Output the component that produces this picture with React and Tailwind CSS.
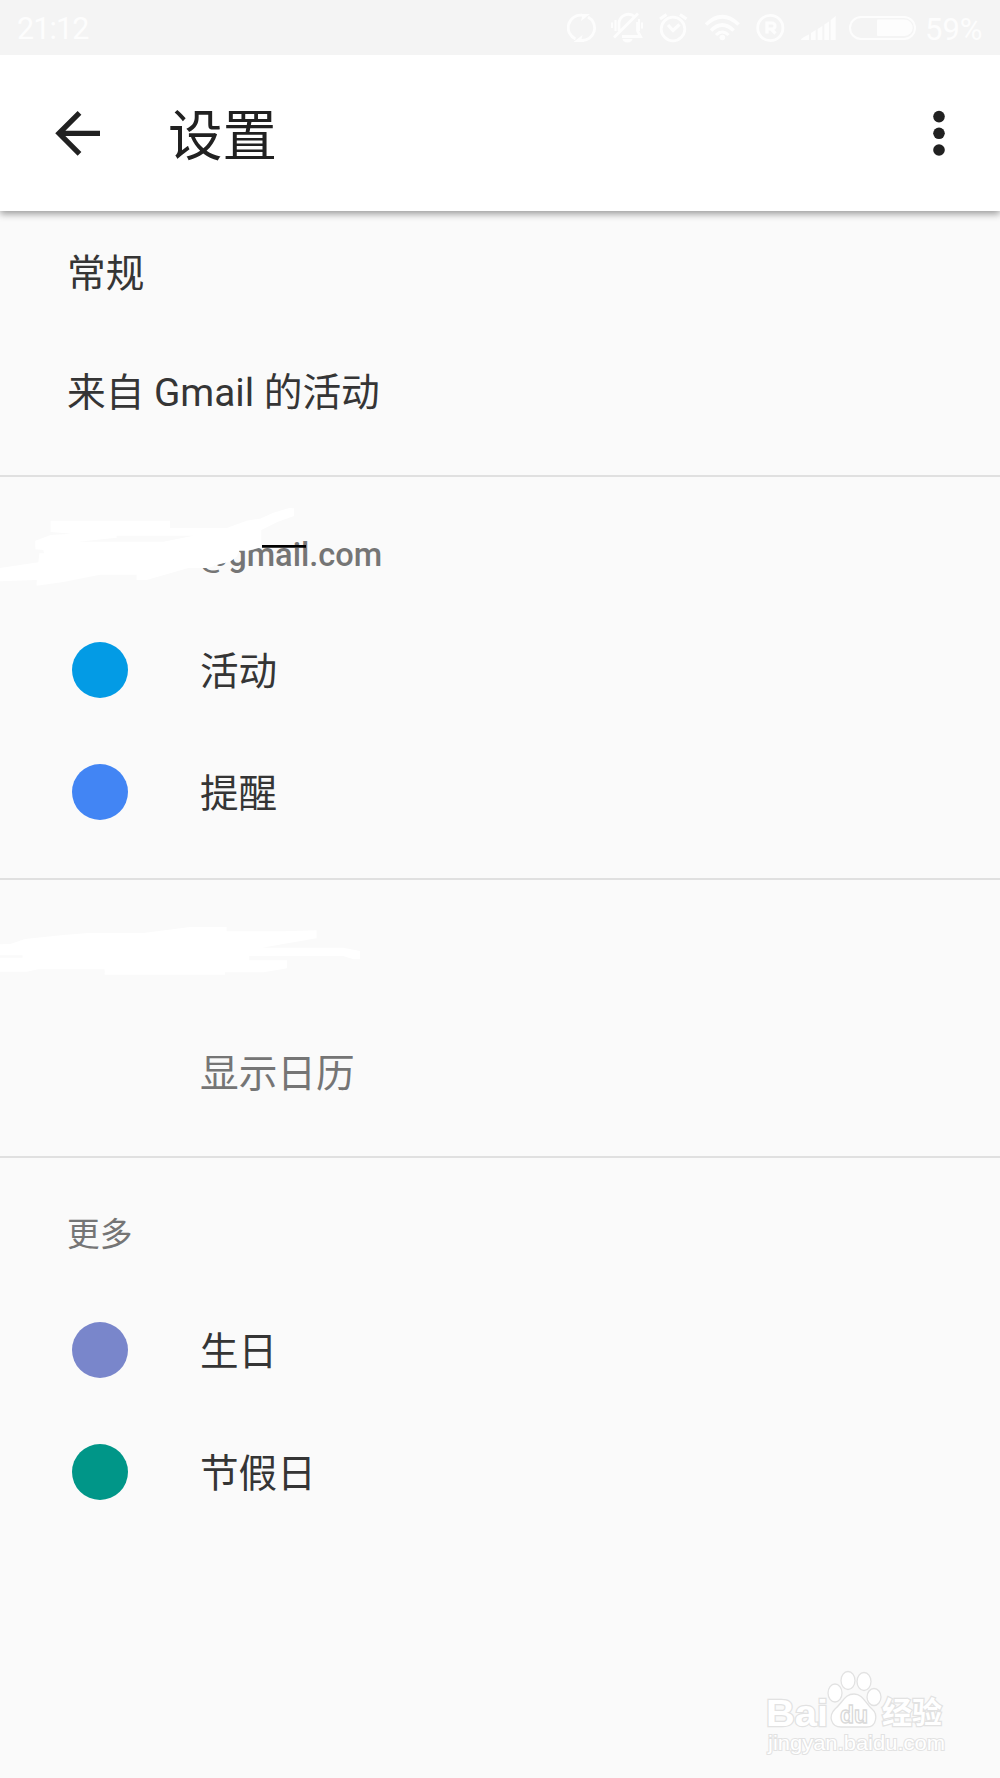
function StatusIcons() {
  return (
    <svg width="358" height="55" viewBox="0 0 358 55" fill="none" stroke="#fdfdfd" strokeWidth="2.8" className="shrink-0">
      <path d="M8.500 39A12.500 12.500 0 0 1 15 15.200M21 17A12.500 12.500 0 0 1 14.500 40.500" />
      <path d="M13 14h10l-9 7 1-4zM17.500 42h-11l9-7-1 4z" fill="#fdfdfd" stroke="none" />
      <path d="M52 31V24a9.500 9.500 0 0 1 15.500-7.500M70.500 22v9l3 5.500H55M47 37.500L71 13.500" />
      <path d="M55.500 39h10a5 3.500 0 0 1-10 0z" fill="#fdfdfd" stroke="none" />
      <path d="M48.500 20v11M45 22.500v5.500M72 19v12M75 22.500v6" strokeWidth="2" />
      <circle cx="106" cy="29" r="11.800" />
      <path d="M101 25l5 5.500 6.500-6M93 19l6.500-4.500M119.500 19l-6.500-4.500" strokeWidth="3.200" />
      <g strokeWidth="3.600">
        <path d="M139 24.500q16.300-15.500 32.600 0" />
        <path d="M144 30.500q11.300-11 22.600 0" />
        <path d="M149 35q6.300-6 12.600 0" strokeWidth="3" />
      </g>
      <circle cx="155.300" cy="37.500" r="2.800" fill="#fdfdfd" stroke="none" />
      <circle cx="203.300" cy="28" r="12.600" />
      <path d="M200 33.500V23h5a3 3 0 0 1 0 6h-5M204 29l4.500 4.500" strokeWidth="3.200" />
      <path d="M233.700 40q1-2.500 8.300-5.500V40zM244 33l4.700-3V40H244zM250.700 29l4.600-3v14h-4.600zM257.300 24.500l4.700-3V40h-4.700zM263.700 20l5-4V40h-5z" fill="#fdfdfd" stroke="none" />
      <rect x="283" y="17" width="65" height="22" rx="11" strokeWidth="2" />
      <path d="M311 19.500h26.500a8.200 8.200 0 0 1 0 16.500H311q-1 0-1-1V20.500q0-1 1-1z" fill="#fdfdfd" stroke="none" />
    </svg>
  );
}

function CalendarRow({ color, label }) {
  return (
    <div className="flex h-[122px] items-center pl-[72px]">
      <span className={`size-14 rounded-full ${color}`} />
      <span className="ml-[72px] pt-[5px] text-[38.600px] leading-none text-[#353535]">{label}</span>
    </div>
  );
}

function Watermark() {
  return (
    <svg width="190" height="100" viewBox="0 0 190 100" className="absolute left-[763px] top-[1663px]" fill="#fff" stroke="#e2e2e2" strokeWidth="1.300">
      <g paintOrder="stroke" strokeWidth="2.400">
        <text x="3" y="62.500" fontSize="37" fontWeight="700" textLength="62" lengthAdjust="spacingAndGlyphs" className="font-['Liberation_Sans',sans-serif]">Bai</text>
        <text x="119" y="60" fontSize="29.500" fontWeight="700" textLength="60" lengthAdjust="spacingAndGlyphs" className="font-['Noto_Sans_CJK_SC',sans-serif]">经验</text>
        <text x="5" y="87" fontSize="21" textLength="177" lengthAdjust="spacingAndGlyphs" strokeWidth="2" className="font-['Liberation_Sans',sans-serif]">jingyan.baidu.com</text>
      </g>
      <ellipse cx="72" cy="30" rx="7" ry="9" />
      <ellipse cx="85" cy="17.500" rx="7" ry="9" />
      <ellipse cx="101" cy="18.500" rx="7" ry="9" />
      <ellipse cx="111" cy="34" rx="7" ry="8.500" />
      <path d="M91 31c9 0 11 9 18 15 6 5 5 18-5 18H78c-10 0-13-11-6-18 8-7 10-15 19-15z" />
      <text x="77" y="59.500" fontSize="23" fontWeight="700" stroke="#d9d9d9" textLength="28" lengthAdjust="spacingAndGlyphs" className="font-['Liberation_Sans',sans-serif]">du</text>
    </svg>
  );
}

export default function App() {
  return (
    <div className="relative h-[1778px] w-[1000px] overflow-hidden bg-[#fafafa] font-[Roboto,'Noto_Sans_CJK_SC',sans-serif]">
      <div className="relative z-10 flex h-[55px] items-center bg-[#f4f4f4] text-[#fdfdfd]">
        <span className="w-[567px] pl-[17px] pt-[4px] text-[30.500px] leading-none tracking-[-0.900px]">21:12</span>
        <StatusIcons />
        <span className="pt-[4px] text-[31px] leading-none">59%</span>
      </div>
      <header className="relative flex h-[156px] items-center bg-white shadow-[0_3px_7px_rgba(0,0,0,0.38)]">
        <svg width="46" height="46" viewBox="0 0 46 46" className="ml-[55px] shrink-0" fill="none" stroke="#212121" strokeWidth="5.300">
          <path d="M45 23.300H5M24.500 2.800L4 23.300l20.500 20.500" />
        </svg>
        <h1 className="ml-[67px] pt-[7px] text-[54.500px] leading-none text-[#212121]">设置</h1>
        <svg width="12" height="46" viewBox="0 0 12 46" className="ml-auto mr-[55px]" fill="#212121">
          <circle cx="6" cy="6.600" r="5.800" />
          <circle cx="6" cy="23.300" r="5.800" />
          <circle cx="6" cy="40" r="5.800" />
        </svg>
      </header>
      <section className="h-[266px] border-b-2 border-[#e0e0e0] pl-[67px] text-[38.700px] text-[#353535]">
        <div className="flex h-[121px] items-center pt-[5px] leading-none">常规</div>
        <div className="flex h-[121px] items-center pt-[2px] leading-none">来自 Gmail 的活动</div>
      </section>
      <section className="h-[403px] border-b-2 border-[#e0e0e0]">
        <div className="relative h-[132px] pl-[199px] pt-[62px]">
          <span className="text-[32.600px] font-medium leading-none text-[#757575]">@gmail.com</span>
          <svg width="400" height="100" viewBox="0 0 1200 300" className="absolute left-0 top-[23px]">
            <path d="M0 204L115 187 118 160H132L130 150 106 148V122L152 105 215 101 152 96V62H510V84H680L740 62 780 56 820 38 868 24 882 25V48L830 67 784 90V142L745 152H718L710 170 690 185 660 192 625 204H565L440 240H410V224H300L190 246 110 257V240L0 244z" fill="#fff" />
            <path d="M235 125L350 113V107H580L490 125z" fill="#fafafa" />
            <path d="M786 139H918" stroke="#000" strokeWidth="8" />
          </svg>
        </div>
        <CalendarRow color="bg-[#039be5]" label="活动" />
        <CalendarRow color="bg-[#4285f4]" label="提醒" />
      </section>
      <section className="h-[278px] border-b-2 border-[#e0e0e0]">
        <div className="h-[132px] pt-[35px]">
          <svg width="400" height="70" viewBox="0 0 1200 210" fill="#fff">
            <path d="M0 88L30 87 75 72 190 60 265 54H430L570 36H680V49H850L950 46V70L785 98H1030L1080 108V133H1060L1030 123H748V136H861V160L790 172H675V179H314V163H115L80 170H0V128H68V121H0z" />
          </svg>
        </div>
        <div className="flex h-[122px] items-center pl-[200px] pt-[3px] text-[38.700px] leading-none text-[#757575]">显示日历</div>
      </section>
      <section>
        <div className="flex h-[131px] items-center pl-[67px] pt-[24px] text-[32.700px] leading-none text-[#757575]">更多</div>
        <CalendarRow color="bg-[#7986cb]" label="生日" />
        <CalendarRow color="bg-[#009688]" label="节假日" />
      </section>
      <Watermark />
    </div>
  );
}
